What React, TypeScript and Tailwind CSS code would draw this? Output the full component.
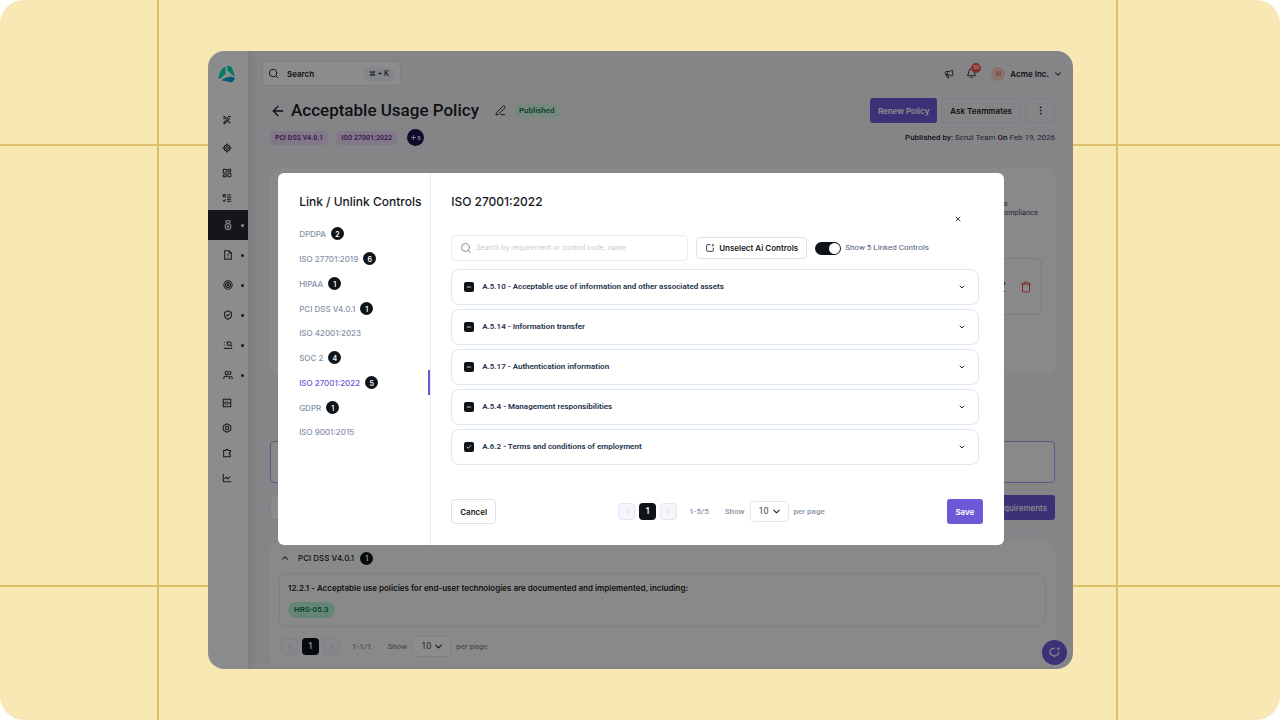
import { useState } from "react";
import type { ReactNode } from "react";
import {
  ArrowLeft,
  Bell,
  Bolt,
  ChartLine,
  Check,
  ChevronDown,
  ChevronLeft,
  ChevronRight,
  ChevronUp,
  EllipsisVertical,
  LayoutDashboard,
  LocateFixed,
  Megaphone,
  Minus,
  PenLine,
  Plus,
  Search,
  ShieldCheck,
  Target,
  Trash,
  Users,
  X,
} from "lucide-react";

// Outline paths on a 24 unit grid, for the glyphs that lucide draws differently
const GLYPHS = {
  tools: ["M3 3l4 1 3 4", "M14 14l6 6", "M21 3l-5 1L4 19l2 2L19 8", "M3 9l5-1"],
  tasks: ["M3 4h5v5H3z", "M12 5h10M12 10h10M12 15h10M12 20h10", "M3 17l2 3 4-5"],
  medal: ["M12 9a7 7 0 1 0 0 14 7 7 0 0 0 0-14z", "M12 13v1l-2 2 2 2 2-2-2-2", "M7 2h10v4l-5 3-5-3z"],
  file: ["M4 2h11l5 5v15H4z", "M15 2v5h5", "M12 9v5M12 17v2"],
  search: ["M2 6h2M2 12h2M8 6h2", "M2 20h20", "M15 4a4 4 0 1 0 0 9 4 4 0 0 0 0-9z", "M18 12l4 4", "M8 13h1"],
  storage: ["M3 3h18v18H3z", "M3 12h18", "M7 8h2M7 16h2M12 8h2M12 16h2"],
  puzzle: ["M4 6h5a3 3 0 1 1 6 0h5v5a3 3 0 1 0 0 6v4H4z"],
};

function Glyph({ name }: { name: keyof typeof GLYPHS }) {
  return (
    <svg viewBox="0 0 24 24" className="h-[10px] w-[10px] shrink-0" fill="none" stroke="currentColor" strokeWidth="2.500" aria-hidden="true">
      {GLYPHS[name].map(d => (
        <path key={d} d={d} />
      ))}
    </svg>
  );
}

const icon = "h-[10px] w-[10px] shrink-0";

const NAV = [
  { label: "Frameworks", icon: <LocateFixed className={icon} strokeWidth={2.5} /> },
  { label: "Dashboard", icon: <LayoutDashboard className={icon} strokeWidth={2.5} /> },
  { label: "Tasks", icon: <Glyph name="tasks" /> },
  { label: "Compliance", icon: <Glyph name="medal" />, nested: true, active: true },
  { label: "Documents", icon: <Glyph name="file" />, nested: true },
  { label: "Risk", icon: <Target className={icon} strokeWidth={2.5} />, nested: true },
  { label: "Trust", icon: <ShieldCheck className={icon} strokeWidth={2.5} />, nested: true },
  { label: "Audit", icon: <Glyph name="search" />, nested: true },
  { label: "People", icon: <Users className={icon} strokeWidth={2.5} />, nested: true },
  { label: "Assets", icon: <Glyph name="storage" /> },
  { label: "Settings", icon: <Bolt className={icon} strokeWidth={2.5} /> },
  { label: "Integrations", icon: <Glyph name="puzzle" /> },
  { label: "Reports", icon: <ChartLine className={icon} strokeWidth={2.5} /> },
];

const FRAMEWORKS = [
  { name: "DPDPA", count: 2 },
  { name: "ISO 27701:2019", count: 6 },
  { name: "HIPAA", count: 1 },
  { name: "PCI DSS V4.0.1", count: 1 },
  { name: "ISO 42001:2023" },
  { name: "SOC 2", count: 4 },
  { name: "ISO 27001:2022", count: 5 },
  { name: "GDPR", count: 1 },
  { name: "ISO 9001:2015" },
];

const REQUIREMENTS = [
  { title: "A.5.10 - Acceptable use of information and other associated assets", all: false },
  { title: "A.5.14 - Information transfer", all: false },
  { title: "A.5.17 - Authentication information", all: false },
  { title: "A.5.4 - Management responsibilities", all: false },
  { title: "A.6.2 - Terms and conditions of employment", all: true },
];

function Logo() {
  return (
    <svg viewBox="0 0 18 18" className="h-[18px] w-[18px]" aria-hidden="true">
      <path d="M7.500 1.500 Q2 4 .5 12 Q.5 14.500 2.500 13.500 L7.500 9 Z" fill="#00dfc0" />
      <path d="M9 .8 Q14.500 .3 14.800 5.500 L17 11 Q16 11.500 14 9.800 L9.500 5.500 Z" fill="#00e0b0" />
      <path d="M3.500 15.500 Q8.500 11 15.500 12 Q18 12.500 15.800 15.500 Q13.500 18.300 11.500 17 Q8 15.500 3.500 15.500 Z" fill="#00a8d8" />
    </svg>
  );
}

function SparkleLoop({ className }: { className: string }) {
  return (
    <svg viewBox="0 0 24 24" className={className} fill="none" stroke="currentColor" strokeWidth="2" aria-hidden="true">
      <path d="M13 4H10a7 7 0 0 0-3 13h3l2 3 2-3h2a6 6 0 0 0 4-6" />
      <path d="M19 1l1 3 3 1-3 1-1 3-1-3-3-1 3-1z" fill="currentColor" stroke="none" />
    </svg>
  );
}

function UnselectIcon() {
  return (
    <svg viewBox="0 0 24 24" className="h-[10px] w-[10px]" fill="none" stroke="currentColor" strokeWidth="2" aria-hidden="true">
      <path d="M13 4H6a2 2 0 0 0-2 2v12a2 2 0 0 0 2 2h12a2 2 0 0 0 2-2v-7" />
      <path d="M19 1l1 3 3 1-3 1-1 3-1-3-3-1 3-1z" fill="currentColor" stroke="none" />
    </svg>
  );
}

function CountBadge({ children }: { children: ReactNode }) {
  return (
    <span className="flex h-[13px] w-[13px] items-center justify-center rounded-full bg-[#0f1419] pt-px text-[7px] leading-none font-semibold text-white">
      {children}
    </span>
  );
}

function Pager({ range, id }: { range: string; id: string }) {
  const arrow = "flex h-[17px] w-[17px] items-center justify-center rounded border border-[#e4e7f2] bg-[#f5f6fb] text-[#c0c6d6]";
  return (
    <div className="flex items-center font-['Roboto','Liberation_Sans',sans-serif] text-[8px] font-medium text-[#8492a6]">
      <div className="flex gap-1">
        <button aria-label="Previous page" className={arrow}>
          <ChevronLeft className="h-2 w-2" />
        </button>
        <button className="h-[17px] w-[17px] rounded bg-[#0f1419] text-[9px] text-white">1</button>
        <button aria-label="Next page" className={arrow}>
          <ChevronRight className="h-2 w-2" />
        </button>
      </div>
      <span className="ml-3">{range}</span>
      <label htmlFor={id} className="ml-4">Show</label>
      <span className="relative mx-[5px]">
        <select
          id={id}
          className="block h-[21px] w-[39px] appearance-none rounded border border-[#e4e9f0] bg-white pl-2 text-[9px] font-normal text-[#3f4650]"
        >
          <option>10</option>
          <option>20</option>
        </select>
        <ChevronDown className="pointer-events-none absolute top-[5px] right-[7px] h-[11px] w-[11px] text-[#22262c]" strokeWidth={2.5} />
      </span>
      <span>per page</span>
    </div>
  );
}

function Sidebar() {
  return (
    <nav className="z-10 flex w-10 shrink-0 flex-col bg-white text-[#2a2d33] shadow-[2px_0_10px_rgba(30,30,70,0.10)]">
      <a href="#" aria-label="Home" className="flex h-14 items-center justify-center pt-[10px] pr-[2px] pb-5">
        <Logo />
      </a>
      <a href="#" aria-label="Setup" className="mb-[3px] flex h-[25px] items-center pl-[14px]">
        <Glyph name="tools" />
      </a>
      {NAV.map(({ label, icon, nested, active }) => (
        <a
          key={label}
          href="#"
          aria-label={label}
          className={`flex shrink-0 items-center ${nested ? "h-[30px] gap-2 pl-[15px]" : "h-[25px] pl-[14px]"} ${
            active ? "bg-[#272931] text-white" : ""
          }`}
        >
          {icon}
          {nested && <span className="h-[3px] w-[3px] rounded-full bg-current" />}
        </a>
      ))}
    </nav>
  );
}

function TopBar() {
  return (
    <header className="flex h-[25px] items-center justify-between pr-[10px] pl-[14px]">
      <label className="flex h-[25px] w-[139px] items-center rounded border border-[#e8eaf1] bg-white px-[5px]">
        <Search className="h-[11px] w-[11px] shrink-0" />
        <input
          placeholder="Search"
          aria-label="Search"
          className="ml-2 w-full min-w-0 text-[8px] font-semibold outline-none placeholder:text-[#1b1e24]"
        />
        <span className="shrink-0 rounded-lg bg-[#f1f3f8] px-[6px] py-[2px] text-[7px] leading-[10px] font-semibold text-[#33415c]">⌘ + K</span>
      </label>
      <div className="flex items-center">
        <Megaphone className="h-[10px] w-[10px]" />
        <span className="relative ml-3">
          <Bell className="h-[11px] w-[11px]" />
          <span className="absolute -top-[5px] left-[5px] flex h-[10px] w-[10px] items-center justify-center rounded-full bg-[#ff4a48] text-[5px] font-semibold text-white">
            50
          </span>
        </span>
        <span className="ml-[14px] flex h-[14px] w-[14px] items-center justify-center rounded-full bg-[#fcd2c4] text-[6px] text-[#c0503a]">
          AI
        </span>
        <button className="ml-[5px] flex items-center gap-1 text-[8px] font-semibold">
          Acme Inc.
          <ChevronDown className="h-[10px] w-[10px]" strokeWidth={2.5} />
        </button>
      </div>
    </header>
  );
}

function PolicyPage() {
  return (
    <main className="flex min-w-0 flex-1 flex-col bg-[#f2f3f8] pt-[10px] text-[#1b1e24]">
      <TopBar />
      <div className="flex flex-col pr-[18px] pl-[22px]">
        <div className="mt-3 flex h-[25px] items-center">
          <button aria-label="Back">
            <ArrowLeft className="h-4 w-4" />
          </button>
          <h1 className="ml-[5px] font-['Roboto','Liberation_Sans',sans-serif] text-[17px] font-medium">Acceptable Usage Policy</h1>
          <button aria-label="Rename" className="ml-4">
            <PenLine className="h-[11px] w-[11px]" />
          </button>
          <span className="ml-[9px] rounded bg-[#d9f7e6] px-1 py-[2px] font-['Roboto','Liberation_Sans',sans-serif] text-[8px] leading-[10px] font-semibold text-[#12804a]">
            Published
          </span>
          <div className="ml-auto flex gap-1 text-[8px] font-semibold">
            <button className="h-[25px] rounded-[3px] bg-[#6d59d8] px-2 text-white">Renew Policy</button>
            <button className="h-[25px] rounded border border-[#dfe3f0] px-2">Ask Teammates</button>
            <button aria-label="More" className="flex h-[25px] w-[30px] items-center justify-center rounded border border-[#dfe3f0]">
              <EllipsisVertical className="h-[11px] w-[11px]" />
            </button>
          </div>
        </div>

        <div className="mt-[6px] flex h-[17px] items-center gap-2 font-['Roboto','Liberation_Sans',sans-serif] text-[7px] leading-[10px] font-semibold text-[#6b2a94]">
          <span className="rounded bg-[#ecdcf8] px-[5px] py-[2px]">PCI DSS V4.0.1</span>
          <span className="rounded bg-[#ecdcf8] px-[5px] py-[2px]">ISO 27001:2022</span>
          <span className="ml-[2px] flex h-[17px] w-[17px] items-center justify-center rounded-full bg-[#1d1450] text-[6px] text-white">
            <Plus className="h-[7px] w-[7px]" strokeWidth={3} />5
          </span>
          <p className="ml-auto text-[8px] font-normal text-[#33415c]">
            <span className="font-medium text-[#1b2536]">Published by:</span> Scrut Team{" "}
            <span className="font-medium text-[#1b2536]">On</span> Feb 19, 2026
          </p>
        </div>

        <section className="mt-[22px] flex h-[206px] flex-col rounded-lg bg-[#f9f9fb] px-[13px]">
          <p className="mt-[31px] mr-1 ml-auto w-[38px] text-[7px] leading-[9px] text-[#33415c]">
            as<br />compliance
          </p>
          <div className="mt-[41px] flex h-[57px] items-center justify-end gap-[14px] rounded-md border border-[#dfe2ea] pr-[9px]">
            <PenLine className="h-3 w-3" />
            <button aria-label="Delete" className="text-[#f0443e]">
              <Trash className="h-3 w-3" />
            </button>
          </div>
        </section>

        <div className="mt-[67px] h-[42px] rounded border border-[#a99df0] bg-[#fafafc]" />

        <div className="mt-3 flex justify-between">
          <div className="h-[25px] w-[240px] rounded border border-[#e8eaf2] bg-white" />
          <button className="h-[25px] rounded-[3px] bg-[#6d59d8] px-2 text-[8px] font-medium text-white">Link Requirements</button>
        </div>
        <hr className="mt-[13px] border-[#e8eaf2]" />

        <section className="mt-2 flex flex-col rounded-lg bg-[#f9f9fb] px-[9px] pt-[9px] pb-[10px]">
          <h2 className="flex h-[14px] items-center text-[8px] font-medium">
            <ChevronUp className="mr-2 ml-[1px] h-[10px] w-[10px]" strokeWidth={2.5} />
            PCI DSS V4.0.1
            <span className="ml-[6px]">
              <CountBadge>1</CountBadge>
            </span>
          </h2>
          <div className="mt-2 h-[54px] rounded-lg border border-[#e8eaf2] px-2 pt-2">
            <p className="text-[8px] leading-3 font-semibold">
              12.2.1 - Acceptable use policies for end-user technologies are documented and implemented, including:
            </p>
            <span className="mt-2 inline-block rounded-full bg-[#b9f5d8] px-[6px] font-['Roboto','Liberation_Sans',sans-serif] text-[8px] leading-4 font-semibold text-[#107a4c]">
              HRS-05.3
            </span>
          </div>
          <div className="mt-[9px] pl-[2px]">
            <Pager range="1-1/1" id="policy-page-size" />
          </div>
        </section>
      </div>
    </main>
  );
}

function RequirementRow({ title, all }: { title: string; all: boolean }) {
  const [checked, setChecked] = useState(all);
  const Mark = checked ? Check : Minus;
  return (
    <li className="flex h-9 items-center rounded-lg border border-[#dfe7f0] px-3">
      <label className="flex flex-1 items-center gap-2 font-['Roboto','Liberation_Sans',sans-serif] text-[8px] font-semibold text-[#22304a]">
        <span className="relative h-[10px] w-[10px]">
          <input
            type="checkbox"
            checked={checked}
            onChange={e => setChecked(e.target.checked)}
            className="block h-[10px] w-[10px] appearance-none rounded-[2px] bg-[#0f1419]"
          />
          <Mark className="pointer-events-none absolute top-[2px] left-[2px] h-[6px] w-[6px] text-white" strokeWidth={3} />
        </span>
        {title}
      </label>
      <button aria-label="Expand">
        <ChevronDown className="h-2 w-2 text-[#22262c]" strokeWidth={3} />
      </button>
    </li>
  );
}

function LinkControlsModal() {
  const [selected, setSelected] = useState("ISO 27001:2022");

  return (
    <div role="dialog" aria-label="Link / Unlink Controls" className="flex w-[84%] rounded-md bg-white text-[#15181d]">
      <aside className="flex w-[153px] shrink-0 flex-col border-r border-[#e6ecf4] pt-[21px]">
        <h2 className="pl-[21px] text-[12px] leading-4 font-medium whitespace-nowrap">Link / Unlink Controls</h2>
        <ul className="mt-[11px]">
          {FRAMEWORKS.map(f => (
            <li key={f.name}>
              <button
                onClick={() => setSelected(f.name)}
                className={`flex w-full items-center gap-[5px] border-r-2 pl-[21px] text-[8px] font-medium ${
                  f.count ? "h-[25px]" : "h-6"
                } ${selected === f.name ? "border-[#6d59d8] text-[#6d59d8]" : "border-transparent text-[#8492a6]"}`}
              >
                {f.name}
                {f.count && <CountBadge>{f.count}</CountBadge>}
              </button>
            </li>
          ))}
        </ul>
      </aside>

      <section className="flex min-w-0 flex-1 flex-col pt-[21px] pr-[21px] pb-[21px] pl-5">
        <h2 className="text-[12px] leading-4 font-medium">ISO 27001:2022</h2>
        <button aria-label="Close" className="mt-[5px] mr-[21px] self-end">
          <X className="h-2 w-2" strokeWidth={2.5} />
        </button>

        <div className="mt-3 flex items-center">
          <label className="flex h-[26px] w-[237px] items-center rounded border border-[#e6ecf4] px-2">
            <Search className="h-3 w-3 shrink-0 text-[#7b8a9e]" />
            <input
              aria-label="Search requirements"
              placeholder="Search by requirement or control code, name"
              className="ml-1 w-full min-w-0 text-[7px] outline-none placeholder:text-[#c3cad5]"
            />
          </label>
          <button className="ml-2 flex h-[22px] items-center gap-1 rounded border border-[#d8e2ee] px-2 text-[8px] font-semibold whitespace-nowrap">
            <UnselectIcon />
            Unselect Ai Controls
          </button>
          <label className="ml-2 flex items-center gap-1 font-['Roboto','Liberation_Sans',sans-serif] text-[8px] whitespace-nowrap text-[#4d6075]">
            <input
              type="checkbox"
              role="switch"
              defaultChecked
              className="flex h-[13px] w-[26px] appearance-none items-center rounded-full bg-[#0f1419] px-[1px] before:h-[11px] before:w-[11px] before:rounded-full before:bg-white checked:justify-end"
            />
            Show 5 Linked Controls
          </label>
        </div>

        <ul className="mt-2 mr-1 flex flex-col gap-1">
          {REQUIREMENTS.map(r => (
            <RequirementRow key={r.title} title={r.title} all={r.all} />
          ))}
        </ul>

        <div className="mt-[34px] flex items-center justify-between text-[8px] font-semibold">
          <button className="h-[25px] w-[45px] rounded border border-[#d8e2ee]">Cancel</button>
          <Pager range="1-5/5" id="modal-page-size" />
          <button className="h-[25px] w-9 rounded-[3px] bg-[#6d59d8] text-white">Save</button>
        </div>
      </section>
    </div>
  );
}

export default function App() {
  return (
    <div className="relative flex min-h-screen overflow-hidden rounded-3xl bg-[#f8e8b4] py-[51px] pr-[207px] pl-52 font-['Inter','Liberation_Sans',sans-serif]">
      {/* backdrop rules */}
      <div className="absolute inset-0 grid grid-cols-[159fr_959fr_162fr] grid-rows-[146fr_441fr_133fr]" aria-hidden="true">
        {Array.from({ length: 9 }, (_, i) => (
          <div key={i} className={`border-[#dfc06a] ${i % 3 < 2 ? "border-r-2" : ""} ${i < 6 ? "border-b-2" : ""}`} />
        ))}
      </div>

      <div className="relative flex min-w-0 flex-1 overflow-hidden rounded-2xl bg-white">
        <Sidebar />
        <PolicyPage />
        <button
          aria-label="Assistant"
          className="absolute right-[6px] bottom-1 flex h-[25px] w-[25px] items-center justify-center rounded-full bg-[#6d59d8] text-white"
        >
          <SparkleLoop className="h-[13px] w-[13px]" />
        </button>
        <div className="absolute inset-0 z-20 flex items-center justify-center bg-black/45 pb-[2px] pl-px">
          <LinkControlsModal />
        </div>
      </div>
    </div>
  );
}
